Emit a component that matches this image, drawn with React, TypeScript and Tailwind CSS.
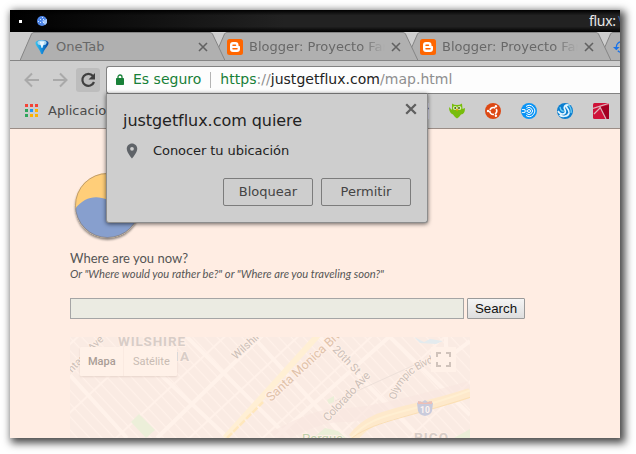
import React from "react";

const DEJAVU = "font-['DejaVu_Sans',sans-serif]";

function BloggerIcon() {
  return (
    <svg width="16" height="16" viewBox="0 0 16 16" className="shrink-0">
      <rect width="16" height="16" rx="2.5" fill="#ff6600" />
      <path d="M6 3h2.500a3 3 0 0 1 3 3v.5c0 .5.3.6.8.6.5 0 .7.3.7.8V10a3 3 0 0 1-3 3H6a3 3 0 0 1-3-3V6a3 3 0 0 1 3-3Z" fill="#fff" />
      <path d="M6 6.300h2.500M6 9.800h4" stroke="#ff6600" strokeWidth="1.500" strokeLinecap="round" />
    </svg>
  );
}

function OneTabIcon() {
  return (
    <svg width="16" height="16" viewBox="0 0 16 16" className="shrink-0">
      <defs>
        <linearGradient id="cone" x1="0" y1="0" x2="1" y2="0">
          <stop offset="0" stopColor="#35c4ef" />
          <stop offset=".5" stopColor="#148cdc" />
          <stop offset="1" stopColor="#06439b" />
        </linearGradient>
      </defs>
      <path d="M1.500 4C1.500 0 14.500 0 14.500 4 14.500 7 10 10 9 14.500Q8 16 7 14.500C6 10 1.500 7 1.500 4Z" fill="url(#cone)" />
      <ellipse cx="8" cy="3.700" rx="4.600" ry="2.500" fill="#a9d6f0" />
      <path d="M5.500 2.500H10.500L8.400 9H7.600Z" fill="#e9f7ff" />
    </svg>
  );
}

function Cross({ size, color, weight }: { size: number; color: string; weight: number }) {
  return (
    <svg width={size} height={size} viewBox="0 0 10 10" className="shrink-0">
      <path d="M1 1 9 9M9 1 1 9" stroke={color} strokeWidth={weight} />
    </svg>
  );
}

function Tab({ icon, title, layer }: { icon: React.ReactNode; title: string; layer: string }) {
  return (
    <div className={`relative -mr-3 flex h-[29px] w-[205px] shrink-0 items-center pl-[14px] pr-[17px] ${layer}`}>
      <svg width="205" height="29" className="absolute left-0 top-0">
        <path d="M0 28.500 11.500 2Q12.300.5 14 .5H190Q191.700.5 192.500 2L205 28.500Z" fill="#b0b0b0" stroke="#858585" />
      </svg>
      <div className="relative flex w-full items-center">
        {icon}
        <span className={`ml-[6px] min-w-0 flex-1 overflow-hidden whitespace-nowrap text-[13px] leading-[18px] text-[#686868] ${title.length > 8 ? "[mask-image:linear-gradient(to_right,#000_112px,transparent_136px)]" : ""}`}>
          {title}
        </span>
        <span className="ml-1.5">
          <Cross size={10} color="#626262" weight={1.6} />
        </span>
      </div>
    </div>
  );
}

function AppsIcon() {
  const colors = ["#f44336", "#f44336", "#f44336", "#2fa55b", "#2196f3", "#fbb300", "#2fa55b", "#fbb300", "#fbb300"];
  return (
    <svg width="13" height="13" className="shrink-0">
      {colors.map((c, i) => (
        <rect key={i} x={(i % 3) * 5} y={Math.floor(i / 3) * 5} width="3" height="3" fill={c} />
      ))}
    </svg>
  );
}

function BookmarkIcons() {
  return (
    <div className="ml-auto flex items-center gap-5">
      <svg width="16" height="16" viewBox="0 0 16 16">
        <rect width="16" height="16" fill="#dcdcee" />
        <path d="M9 5.500H15.500" stroke="#1b2b6b" strokeWidth="1.500" />
      </svg>
      <svg width="16" height="16" viewBox="0 0 16 16">
        <path d="M3 .5Q5 2 8 2T13 .5L13.500 6 16 5Q16 11 12 11.500L10 14 8 15.500 6 14 4 11.500Q0 10 0 4L3 7Z" fill="#78bd0c" />
        <circle cx="6" cy="5" r="2.100" fill="#d8efb0" /><circle cx="10.300" cy="5" r="2.100" fill="#d8efb0" />
        <circle cx="6.200" cy="5" r=".9" fill="#405018" /><circle cx="10" cy="5" r=".9" fill="#405018" />
        <path d="M7 6h2.300L8 8.500Z" fill="#ff9b00" />
      </svg>
      <svg width="16" height="16" viewBox="0 0 16 16">
        <circle cx="8" cy="8" r="8" fill="#dd4814" />
        <circle cx="8.300" cy="8" r="3.500" fill="none" stroke="#fff" strokeWidth="1.700" strokeDasharray="6.300 1" strokeDashoffset="2.700" />
        <circle cx="3" cy="8" r="1.200" fill="#fff" /><circle cx="10.900" cy="3.300" r="1.200" fill="#fff" /><circle cx="10.900" cy="12.700" r="1.200" fill="#fff" />
      </svg>
      <svg width="16" height="16" viewBox="0 0 16 16">
        <circle cx="8" cy="8" r="8" fill="#0a94f5" />
        <path d="M5 3.500A5.500 5.500 0 1 1 5 12.500M5.500 5.500A3.500 3.500 0 1 1 5.500 10.500" fill="none" stroke="#fff" strokeWidth="1" />
        <circle cx="8" cy="8" r="1.500" fill="none" stroke="#fff" />
        <path d="M1 6.500H4V9.500H1M4 8H6.500" fill="none" stroke="#d8efff" />
      </svg>
      <svg width="16" height="16" viewBox="0 0 16 16">
        <circle cx="8" cy="8" r="8" fill="#0b7fd0" />
        <path d="M1 8C4 13 10 11 8 7 6 4 8 1.500 11 2 6 4 13 5 12 10 11 14 5 14 2.500 12" fill="none" stroke="#e2f5ff" strokeWidth="1.700" />
        <path d="M3 4Q4 9 7 8M11 2Q15 5 14 10" fill="none" stroke="#70cff4" strokeWidth="1.300" />
      </svg>
      <svg width="16" height="16" viewBox="0 0 16 16">
        <rect width="16" height="16" rx="1.500" fill="#cf1238" />
        <path d="M7 4 16 2V16H13Z" fill="#a30022" />
        <path d="M0 5.500 15.500.5M6.500 3 13 16M7 5 1 11" stroke="#dcb5bb" strokeWidth="1.200" />
      </svg>
    </div>
  );
}

function MapDrawing() {
  return (
    <svg width="400" height="101" viewBox="0 0 400 101" className="absolute left-0 top-0 font-[Roboto,sans-serif]">
      <defs>
        <pattern id="blocks" width="50" height="9" patternUnits="userSpaceOnUse" patternTransform="translate(3 3) rotate(47)">
          <rect width="50" height="9" fill="#faebe3" />
          <path d="M0 .7H50" stroke="#fff1e9" strokeWidth="1.300" />
          <path d="M1 0V9" stroke="#fff1e9" strokeWidth="2" />
        </pattern>
      </defs>
      <rect width="400" height="101" fill="url(#blocks)" />
      <g fill="none" stroke="#fff2ea">
        <path d="M87 101 200-9M205 101 337-16M40-10 158 101M0 38 57 101M242-8 350 101M176-8 275 101M109-8 219 101" strokeWidth="4" />
        <path d="M320 0 400 78M366 30 400 4M376 0V20" strokeWidth="4" />
      </g>
      <path d="M205 101Q248 77 274 78T400 51" fill="none" stroke="#f9e6e0" strokeWidth="14" opacity=".6" />
      <path d="M344 0 354 5 360 2 373 4 366 7 350 6Z" fill="#e4ebee" />
      <path d="M61 85 69 77 85 93 76 101Z" fill="#ecefd9" />
      <path d="M257 63 264 59 264 65 259 67ZM243 101 255 91 268 94 276 101ZM384 101 400 92V101Z" fill="#ebefd8" />
      <path d="M155 101 250-4" stroke="#ffefd4" strokeWidth="6" />
      <path d="M157 101 193 65" stroke="#ffe7bd" strokeWidth="2.500" strokeDasharray="7 2" />
      <path d="M283 101C303 74 330 79 400 56" fill="none" stroke="#fee9cb" strokeWidth="10" />
      <path d="M278 105C302 72 334 80 401 53" fill="none" stroke="#ffefd2" strokeWidth="2" />
      <path d="M278 104C302 84 334 82 401 60" fill="none" stroke="#fbdfb4" />
      <path d="M265 64 351 25" stroke="#eee1da" />
      <g fill="#cbbfb8" stroke="#fff0e7" strokeWidth="2" paintOrder="stroke" fontSize="11">
        <g fill="#d8cdc7" fontWeight="700">
          <text x="48" y="9" fontSize="13.500" textLength="67">WILSHIRE</text>
          <text x="44" y="24" fontSize="13.500" textLength="75">MONTANA</text>
          <text x="344" y="104.500" fontSize="13.500" textLength="34">PICO</text>
        </g>
        <text transform="translate(2 36) rotate(-46)" fontSize="10.500">ntana Ave</text>
        <text transform="translate(166 23) rotate(-43)">Wilshire Blvd</text>
        <text transform="translate(262 13) rotate(46)" fontSize="11" textLength="35">20th St</text>
        <text transform="translate(258 85) rotate(-47)" fontSize="11.500" textLength="63">Colorado Ave</text>
        <path id="olympic" d="M326 63Q331 37 367 24" fill="none" stroke="none" />
        <text fontSize="10.500"><textPath href="#olympic" textLength="56">Olympic Blvd</textPath></text>
        <text transform="translate(201 65) rotate(-43)" fill="#dfc2aa" fontSize="12.500">Santa Monica Blvd</text>
        <text x="232" y="106" fill="#bfd1ac" fontSize="13">Parque</text>
      </g>
      <path d="M347 66Q350 63 352 65L355 63 358 65Q360 63 363 66L362 74Q361 78 355 79 349 78 348 74Z" fill="#c9cbdc" />
      <path d="M348 64 355 66 362 64V67H348Z" fill="#edbfb5" />
      <text x="350" y="75.500" fill="#fff4ef" fontWeight="700" fontSize="8.500">10</text>
    </svg>
  );
}

function Logo() {
  return (
    <svg width="72" height="72" viewBox="0 0 72 72" className="absolute left-[62px] top-[42px] overflow-visible">
      <defs>
        <filter id="shade" x="-20%" y="-20%" width="140%" height="140%">
          <feDropShadow dx="0" dy="2" stdDeviation="1" floodOpacity=".45" />
        </filter>
        <clipPath id="disc"><circle cx="35.500" cy="34.500" r="32.500" /></clipPath>
      </defs>
      <circle cx="35.500" cy="34.500" r="32.500" fill="#ffce79" filter="url(#shade)" />
      <path clipPath="url(#disc)" d="M0 42C10 27 22 23 36 29S60 45 72 32V72H0Z" fill="#879fce" />
      <circle cx="35.500" cy="34.500" r="32" fill="none" stroke="#85705e" strokeWidth=".8" opacity=".65" />
    </svg>
  );
}

function PermissionDialog() {
  return (
    <div className="absolute left-[96px] top-[83px] z-20 flex h-[130px] w-[322px] flex-col rounded-b-[3px] border border-[#8d8d8d] border-t-[#6f6f6f] bg-[#cecece] px-4 shadow-[0_1px_4px_rgba(0,0,0,0.6)]">
      <div className="flex h-[42px] justify-between">
        <h1 className="mt-[17px] whitespace-nowrap text-[16px] leading-5 tracking-[-0.05px] text-[#222]">justgetflux.com quiere</h1>
        <span className="-mr-[6px] mt-[9px] h-3"><Cross size={12} color="#5f5f5f" weight={1.9} /></span>
      </div>
      <div className="flex h-[29px] items-center text-[13px] tracking-[-0.07px] text-[#222]">
        <svg width="18" height="18" viewBox="0 0 24 24" className="mr-3 fill-[#5f6368]">
          <path d="M12 2C8.130 2 5 5.130 5 9c0 5.250 7 13 7 13s7-7.750 7-13c0-3.870-3.130-7-7-7zm0 9.500a2.500 2.500 0 1 1 0-5 2.500 2.500 0 0 1 0 5z" />
        </svg>
        Conocer tu ubicación
      </div>
      <div className="mt-[13px] flex justify-end gap-2 text-[13px] text-[#444]">
        <button className="h-7 w-[90px] rounded-[2px] border border-[#7c7c7c]">Bloquear</button>
        <button className="h-7 w-[90px] rounded-[2px] border border-[#7c7c7c]">Permitir</button>
      </div>
    </div>
  );
}

export default function App() {
  return (
    <div className="h-[454px] w-[636px] overflow-hidden bg-white p-[10px]">
      <div className="h-[428px] w-[610px] shadow-[3px_3px_8px_2px_rgba(0,0,0,0.72)]">
        <div className={`relative flex h-full flex-col overflow-hidden bg-[#cecece] ${DEJAVU}`}>
          <div className="flex h-[22px] shrink-0 items-center bg-[linear-gradient(to_bottom,#000,transparent_25%_75%,#000),linear-gradient(to_right,#000,#222_45%,#222)]">
            <span className="ml-[9px] size-[3px] bg-white" />
            <svg width="10" height="10" className="ml-[15px]">
              <circle cx="5" cy="5" r="5" fill="#4e86e8" />
              <path d="M5 5 10 3V7L8 9Z" fill="#a6c8fa" />
              <path d="M3 3h1v1H3zM6 3h1v1H6zM3 6h1v1H3zM6 6h1v1H6zM5 1h1v1H5zM1 5h1v1H1z" fill="#d9eaff" />
            </svg>
            <span className="ml-auto w-[31px] overflow-hidden whitespace-nowrap font-['Noto_Sans',sans-serif] text-[14px] leading-5 tracking-[-0.3px] text-[#e8e8e8]">
              flux:<span className="-ml-px text-[#365a8b]"> V</span>
            </span>
          </div>
          <div className="flex h-[29px] shrink-0 overflow-hidden border-b border-[#858585] bg-[#cecece] pl-[10px]">
            <Tab icon={<OneTabIcon />} title="OneTab" layer="z-[4]" />
            <Tab icon={<BloggerIcon />} title="Blogger: Proyecto Farmacia" layer="z-[3]" />
            <Tab icon={<BloggerIcon />} title="Blogger: Proyecto Farmacia" layer="z-[2]" />
            <Tab
              icon={<svg width="16" height="16" viewBox="0 0 24 24" className="shrink-0 fill-[#1a73e8]"><path d="M13 3a9 9 0 0 0-9 9H0l5 5 5-5H6a7 7 0 1 1 2 5l-1.500 1.500A9 9 0 1 0 13 3Z" /></svg>}
              title="" layer="z-[1]"
            />
          </div>
          <div className="flex h-9 shrink-0 items-center pt-[1px]">
            <svg width="86" height="26" className="ml-[10px] shrink-0" fill="none">
              <g stroke="#a9a9a9" strokeWidth="2"><path d="M19 13H6M12 6.500 5.500 13 12 19.500M33 13H46M40 6.500 46.500 13 40 19.500" /></g>
              <rect x="56" y="1" width="24" height="24" rx="3" fill="#bdbdbd" />
              <path d="M73 9A6 6 0 1 0 74 15" stroke="#3f3f3f" strokeWidth="2.200" />
              <path d="M75 6V12.500H68.500Z" fill="#3f3f3f" />
            </svg>
            <div className="flex h-7 min-w-0 flex-1 items-center overflow-hidden whitespace-nowrap rounded-l-[3px] border border-r-0 border-[#828282] bg-[#fdfdfd] pl-[9px] text-[14px]">
              <svg width="8" height="11" viewBox="0 0 8 11" className="shrink-0">
                <rect y="4" width="8" height="7" rx=".7" fill="#188038" />
                <path d="M2 5V3a2 2 0 0 1 4 0V5" fill="none" stroke="#188038" strokeWidth="1.300" />
              </svg>
              <span className="ml-[9px] text-[#188038]">Es seguro</span>
              <span className="ml-[9px] mr-[9px] h-4 w-px bg-[#b4b4b4]" />
              <span className="tracking-[0.03px] text-[#8f8f8f]"><span className="text-[#188038]">https</span>://<span className="text-[#222]">justgetflux.com</span>/map.html</span>
            </div>
          </div>
          <div className="flex h-[32px] shrink-0 items-center border-b border-[#9b8d86] pb-1 pl-[15px] pr-[11px]">
            <AppsIcon />
            <span className="ml-[10px] text-[13px] text-[#4b4b4b]">Aplicaciones</span>
            <BookmarkIcons />
          </div>
          <main className="relative flex-1 bg-[#ffede3] pl-[60px] pt-[121px] font-[Lato,sans-serif] text-[#555]">
            <Logo />
            <p className="h-[17px] whitespace-nowrap text-[13px] leading-[17px]">Where are you now?</p>
            <p className="h-4 whitespace-nowrap text-[11.2px] italic leading-[14px]">Or "Where would you rather be?" or "Where are you traveling soon?"</p>
            <div className="mt-[15px] flex gap-[3px]">
              <input className="h-[21px] w-[394px] border border-[#a5a5a5] bg-[#ebebe2]" />
              <button className="h-[21px] w-[58px] rounded-[1px] border border-[#9a9a9a] bg-linear-to-b from-[#f5f5f5] to-[#dedede] font-['Liberation_Sans',sans-serif] text-[13.3px] leading-[18px] text-[#111]">Search</button>
            </div>
            <div className="relative mt-[18px] h-[101px] w-[400px] overflow-hidden">
              <MapDrawing />
              <div className="absolute left-[10px] top-[10px] flex h-[29px] items-center rounded-[1px] bg-[#fff1e8] font-[Roboto,sans-serif] text-[11px] shadow-[0_1px_2px_rgba(100,60,40,0.12)]">
                <span className="w-[43px] pl-2 font-medium leading-[31px] text-[#a99d96]">Mapa</span>
                <span className="w-[54px] border-l border-[#faeae1] pl-[9px] leading-[29px] text-[#c8bbb3]">Satélite</span>
              </div>
              <div className="absolute right-[14px] top-[10px] flex size-[25px] items-center justify-center bg-[#fff1e8]">
                <svg width="15" height="15" fill="none" stroke="#d0c3bb" strokeWidth="2"><path d="M1 5V1H5M10 1H14V5M14 10V14H10M5 14H1V10" /></svg>
              </div>
            </div>
          </main>
          <PermissionDialog />
        </div>
      </div>
    </div>
  );
}
